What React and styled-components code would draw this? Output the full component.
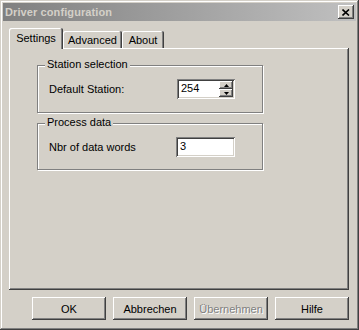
import React from "react";
import styled, { createGlobalStyle } from "styled-components";

const GlobalStyle = createGlobalStyle`
    html, body {
        margin: 0;
        padding: 0;
        background: #d4d0c8;
    }
    * {
        box-sizing: border-box;
    }
`;

const face = "#d4d0c8";
const shadow = "#808080";
const dark = "#404040";

// raised 3D edge, classic style
const raised = `
    box-shadow: inset -1px -1px ${dark}, inset 1px 1px #fff, inset -2px -2px ${shadow};
`;

const Window = styled.div`
    width: 359px;
    height: 330px;
    padding: 3px;
    display: flex;
    flex-direction: column;
    background: ${face};
    box-shadow: inset -1px -1px ${dark}, inset 1px 1px ${face}, inset -2px -2px ${shadow}, inset 2px 2px #fff;
    font-family: "Liberation Sans", Arial, sans-serif;
    font-size: 11px;
    color: #000;
`;

const TitleBar = styled.div`
    height: 18px;
    display: flex;
    align-items: center;
    justify-content: space-between;
    padding: 0 2px 0 2px;
    background: linear-gradient(to right, #808080, #c0c0c0);
`;

const Title = styled.span`
    font-weight: bold;
    color: ${face};
    letter-spacing: 0.1px;
`;

const CloseButton = styled.div`
    width: 16px;
    height: 14px;
    background: ${face};
    display: flex;
    align-items: center;
    justify-content: center;
    ${raised}
`;

const Content = styled.div`
    flex: 1;
    display: flex;
    flex-direction: column;
    padding: 7px 7px 7px 6px;
`;

const TabStrip = styled.div`
    height: 20px;
    display: flex;
    align-items: flex-end;
    position: relative;
    z-index: 1;
`;

const Tab = styled.div`
    width: ${(p) => p.width}px;
    height: ${(p) => (p.active ? 21 : 17)}px;
    margin-bottom: ${(p) => (p.active ? -1 : 0)}px;
    display: flex;
    justify-content: center;
    padding-top: ${(p) => (p.active ? 4 : 3)}px;
    background: ${face};
    border-radius: 2px 2px 0 0;
    box-shadow: inset -1px 0 ${dark}, inset 1px 1px #fff, inset -2px 0 ${shadow};
`;

const Panel = styled.div`
    height: 242px;
    padding: 10px 0 0 28px;
    display: flex;
    flex-direction: column;
    gap: 3px;
    ${raised}
`;

const Group = styled.div`
    position: relative;
    width: 226px;
    height: ${(p) => p.height}px;
    margin-top: 7px;
    padding: 13px 0 0 11px;
    border: 1px solid ${shadow};
    box-shadow: inset 1px 1px #fff, 1px 1px #fff;
`;

const Legend = styled.span`
    position: absolute;
    top: -8px;
    left: 7px;
    padding: 0 2px;
    background: ${face};
`;

const Row = styled.div`
    display: flex;
    align-items: center;
`;

const Label = styled.span`
    width: ${(p) => p.width}px;
`;

const Field = styled.div`
    width: ${(p) => p.width}px;
    height: 20px;
    display: flex;
    background: #fff;
    padding: 2px;
    box-shadow: inset 1px 1px ${shadow}, inset -1px -1px #fff, inset 2px 2px ${dark}, inset -2px -2px ${face};
`;

const FieldText = styled.span`
    flex: 1;
    padding: 1px 0 0 2px;
`;

const Spinner = styled.div`
    width: 14px;
    display: flex;
    flex-direction: column;
`;

const SpinButton = styled.div`
    flex: 1;
    background: ${face};
    display: flex;
    align-items: center;
    justify-content: center;
    ${raised}
`;

const ButtonRow = styled.div`
    display: flex;
    justify-content: flex-end;
    gap: 7px;
    margin-top: 7px;
`;

const Button = styled.div`
    width: 74px;
    height: 23px;
    display: flex;
    align-items: center;
    justify-content: center;
    background: ${face};
    color: ${(p) => (p.disabled ? shadow : "#000")};
    text-shadow: ${(p) => (p.disabled ? "1px 1px #fff" : "none")};
    ${raised}
`;

const Arrow = ({ down }) => (
    <svg width="5" height="3" viewBox="0 0 5 3">
        <path d={down ? "M0 0h5L2.5 3z" : "M0 3h5L2.5 0z"} fill="#000" />
    </svg>
);

const App = () => {
    return (
        <>
            <GlobalStyle />
            <Window>
                <TitleBar>
                    <Title>Driver configuration</Title>
                    <CloseButton>
                        <svg width="8" height="7" viewBox="0 0 8 7">
                            <path d="M0.5 0.5L7 6.5M7 0.5L0.5 6.5" stroke="#000" strokeWidth="1.6" />
                        </svg>
                    </CloseButton>
                </TitleBar>
                <Content>
                    <TabStrip>
                        <Tab active width={54}>Settings</Tab>
                        <Tab width={59}>Advanced</Tab>
                        <Tab width={42}>About</Tab>
                    </TabStrip>
                    <Panel>
                        <Group height={48}>
                            <Legend>Station selection</Legend>
                            <Row>
                                <Label width={128}>Default Station:</Label>
                                <Field width={58}>
                                    <FieldText>254</FieldText>
                                    <Spinner>
                                        <SpinButton><Arrow /></SpinButton>
                                        <SpinButton><Arrow down /></SpinButton>
                                    </Spinner>
                                </Field>
                            </Row>
                        </Group>
                        <Group height={47}>
                            <Legend>Process data</Legend>
                            <Row>
                                <Label width={127}>Nbr of data words</Label>
                                <Field width={59}>
                                    <FieldText>3</FieldText>
                                </Field>
                            </Row>
                        </Group>
                    </Panel>
                    <ButtonRow>
                        <Button>OK</Button>
                        <Button>Abbrechen</Button>
                        <Button disabled>Übernehmen</Button>
                        <Button>Hilfe</Button>
                    </ButtonRow>
                </Content>
            </Window>
        </>
    );
};

export default App;
